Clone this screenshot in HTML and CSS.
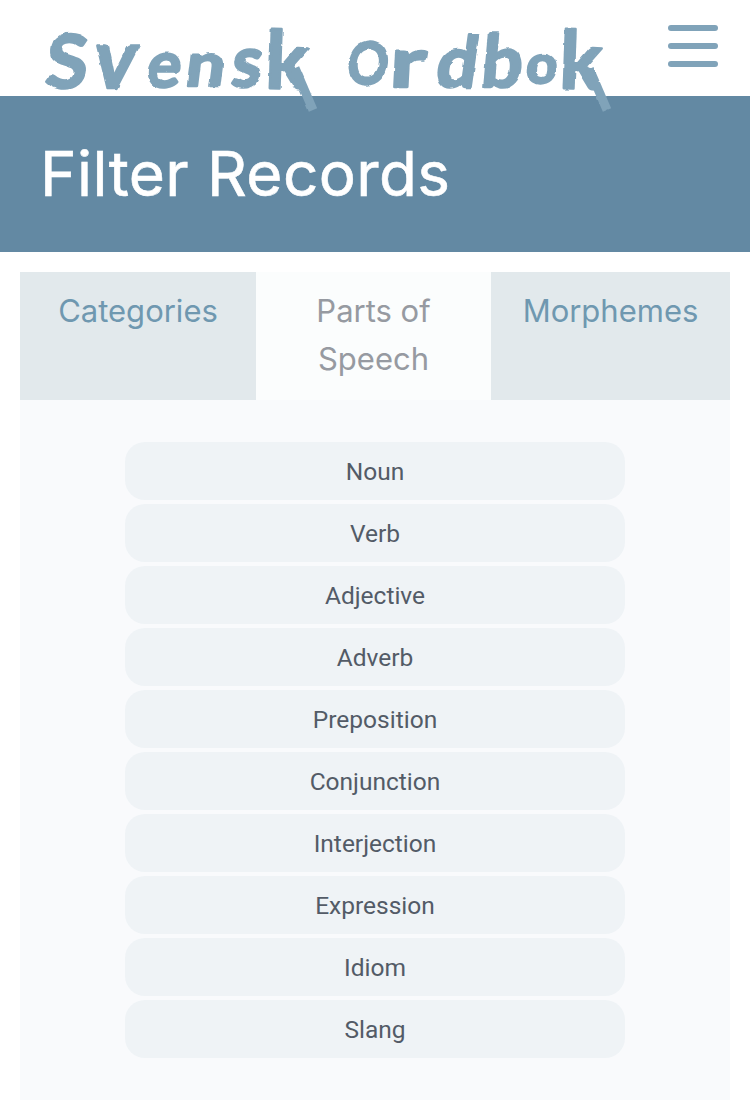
FILE: index.html
```html
<!DOCTYPE html>
<html lang="en">
<head>
<meta charset="utf-8">
<title>Svensk Ordbok</title>
<link rel="stylesheet" href="styles.css">
</head>
<body>
<header class="site-header">
  <svg class="wordmark" width="580" height="96" viewBox="0 0 580 96" role="img" aria-label="Svensk Ordbok">
    <filter id="brush" x="-2%" y="-10%" width="104%" height="140%">
      <feTurbulence type="fractalNoise" baseFrequency="0.1" numOctaves="2" seed="4"/>
      <feDisplacementMap in="SourceGraphic" scale="3" xChannelSelector="R" yChannelSelector="G"/>
    </filter>
    <g filter="url(#brush)">
    <text transform="translate(1 88) skewX(-5)" font-size="74" textLength="42" lengthAdjust="spacingAndGlyphs">S</text>
    <text transform="translate(48 88) skewX(-8)" font-size="83" textLength="42" lengthAdjust="spacingAndGlyphs">v</text>
    <text transform="translate(102 87) skewX(-7)" font-size="64" textLength="34" lengthAdjust="spacingAndGlyphs">e</text>
    <text transform="translate(141 86) skewX(-7)" font-size="61" textLength="39" lengthAdjust="spacingAndGlyphs">n</text>
    <text transform="translate(187 87) skewX(-6)" font-size="72" textLength="30" lengthAdjust="spacingAndGlyphs">s</text>
    <text transform="translate(222 88) rotate(2)" font-size="80" textLength="42" lengthAdjust="spacingAndGlyphs">k</text>
    <line class="tail" x1="252" y1="68" x2="270" y2="110"/>
    <text transform="translate(303 84) skewX(-5)" font-size="58" textLength="41" lengthAdjust="spacingAndGlyphs">O</text>
    <text transform="translate(346 87) skewX(-3)" font-size="69" textLength="36" lengthAdjust="spacingAndGlyphs">r</text>
    <text transform="translate(391 87) skewX(-8)" font-size="71" textLength="41" lengthAdjust="spacingAndGlyphs">d</text>
    <text transform="translate(437 87) skewX(-5)" font-size="72" textLength="41" lengthAdjust="spacingAndGlyphs">b</text>
    <text transform="translate(482 83) skewX(-5)" font-size="54" textLength="31" lengthAdjust="spacingAndGlyphs">o</text>
    <text transform="translate(516 88) rotate(2)" font-size="80" textLength="42" lengthAdjust="spacingAndGlyphs">k</text>
    <line class="tail" x1="546" y1="68" x2="564" y2="110"/>
    </g>
  </svg>
  <svg class="menu-icon" width="50" height="42" viewBox="0 0 50 42" aria-label="Menu">
    <rect width="50" height="6" rx="3"/>
    <rect y="18" width="50" height="6" rx="3"/>
    <rect y="36" width="50" height="6" rx="3"/>
  </svg>
</header>
<h1 class="page-title">Filter Records</h1>
<main class="filters">
  <nav class="tabs">
    <a class="tab">Categories</a>
    <a class="tab tab-active">Parts of Speech</a>
    <a class="tab">Morphemes</a>
  </nav>
  <ul class="options">
    <li class="option">Noun</li>
    <li class="option">Verb</li>
    <li class="option">Adjective</li>
    <li class="option">Adverb</li>
    <li class="option">Preposition</li>
    <li class="option">Conjunction</li>
    <li class="option">Interjection</li>
    <li class="option">Expression</li>
    <li class="option">Idiom</li>
    <li class="option">Slang</li>
  </ul>
</main>
</body>
</html>
```

FILE: styles.css
```css
* { box-sizing: border-box; }
body { margin: 0; background: #fff; font-family: Inter, sans-serif; }
.site-header {
  position: relative;
  display: flex;
  justify-content: space-between;
  align-items: flex-start;
  height: 96px;
  padding: 0 32px 0 43px;
}
.wordmark {
  overflow: visible;
  fill: #80a3b9;
  stroke: #80a3b9;
  stroke-width: 2.5;
  stroke-linejoin: round;
  font-family: Lato, sans-serif;
  font-weight: 700;
}
.wordmark g { color-interpolation-filters: sRGB; }
.tail { stroke-width: 9; }
.menu-icon { margin-top: 25px; fill: #80a3b9; }
.page-title {
  margin: 0;
  height: 156px;
  padding-left: 40px;
  background: #6389a3;
  color: #fff;
  font-size: 62px;
  font-weight: 400;
  line-height: 156px;
  letter-spacing: 0.4px;
  -webkit-text-stroke: 0.6px #fff;
}
.filters { margin: 20px 20px 0; background: #f9fafc; height: 828px; }
.tabs { display: grid; grid-template-columns: 236px 235px 239px; height: 128px; }
.tab {
  padding: 15px 30px;
  background: #e2e9ec;
  color: #6f98b0;
  font-size: 31px;
  line-height: 48px;
  letter-spacing: 0;
  text-align: center;
}
.tab-active { background: #fbfdfd; color: #969aa1; }
.options {
  display: flex;
  flex-direction: column;
  align-items: center;
  gap: 4px;
  margin: 0;
  padding: 42px 0 0;
  list-style: none;
}
.option {
  width: 500px;
  height: 58px;
  border-radius: 20px;
  background: #eff3f6;
  color: #535b67;
  font-family: Roboto, sans-serif;
  font-size: 24.5px;
  line-height: 60px;
  text-align: center;
}
```
